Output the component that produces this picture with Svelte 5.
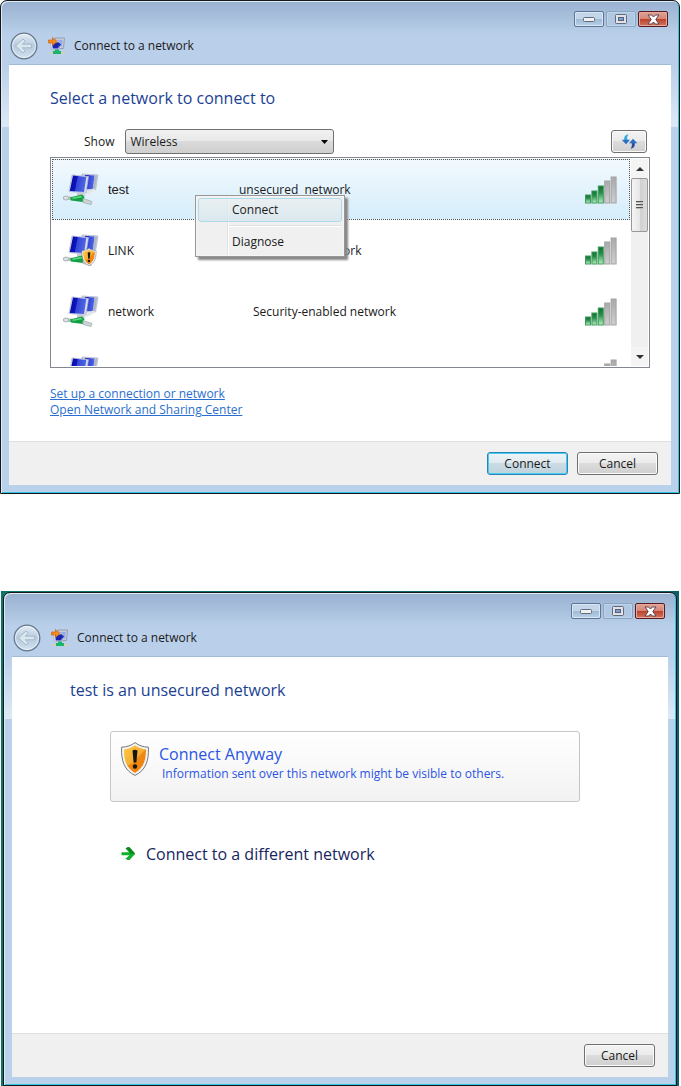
<script>
  let show = $state('Wireless');
  let selected = $state('test');

  const networks = [
    { name: 'test', type: 'unsecured\u00a0 network' },
    { name: 'LINK', type: 'unsecured network', warn: true },
    { name: 'network', type: 'Security-enabled network' },
    { name: '', type: '' },
  ];

  const bars = [8, 12, 17, 22, 26];
</script>

{#snippet shield()}
  <path d="M14 0.6C17.5 3.4 22 5 27.4 5.2C28 19 24.5 28.5 14 33.4C3.5 28.5 0 19 0.6 5.2C6 5 10.5 3.4 14 0.6Z" fill="#f4f4f4" stroke="#777" />
  <path d="M14 3.5C17.4 5.8 21 7 25 7.4C25 19 22 26.5 14 31C6 26.5 3 19 3 7.4C7 7 10.6 5.8 14 3.5Z" fill="url(#amber)" />
  <path d="M3 7.4C7 7 10.6 5.8 14 3.5C17.4 5.8 21 7 25 7.4C21 11 18 13 14 19C10 23 7 24 5.5 22C3.6 18 3 13 3 7.4Z" fill="#ffd65c" opacity="0.45" />
  <path d="M11.5 8.5Q14 7.2 16.5 8.5L15.4 20.5H12.6Z" fill="#16160c" />
  <circle cx="14" cy="24.5" r="2.2" fill="#16160c" />
{/snippet}

{#snippet titlebar()}
  <header>
    <div class="caption">
      <button class="cap" aria-label="Minimize">
        <svg width="12" height="6" viewBox="0 0 12 6"><rect x="0.5" y="1.5" width="11" height="4" rx="1" fill="#f2f2f2" stroke="#626a80" /></svg>
      </button>
      <button class="cap max" aria-label="Maximize">
        <svg width="12" height="10" viewBox="0 0 12 10">
          <rect x="0.5" y="0.5" width="11" height="9" rx="1" fill="#e0e2e6" stroke="#626a80" />
          <rect x="3.5" y="3.5" width="5" height="3" fill="#7b9fd0" stroke="#555f7c" />
        </svg>
      </button>
      <button class="cap close" aria-label="Close">
        <svg width="13" height="11" viewBox="0 0 13 11"><path d="M1 1H4.6L6.5 3L8.4 1H12L8.8 5.5L12 10H8.4L6.5 8L4.6 10H1L4.2 5.500Z" fill="#fff" stroke="#5d4650" /></svg>
      </button>
    </div>
    <div class="nav">
      <button class="back" aria-label="Back">
        <svg width="28" height="28" viewBox="0 0 28 28">
          <circle cx="14" cy="14" r="12.8" fill="url(#glass)" stroke="#68798f" stroke-width="1.3" />
          <circle cx="14" cy="14" r="11.5" fill="none" stroke="#f3f8fc" opacity="0.7" />
          <path d="M5.5 14L13 7L15.3 9.2L12.2 12.2H21.5V15.8H12.2L15.3 18.8L13 21Z" fill="#dbe7ef" stroke="#a5b9ca" stroke-linejoin="round" />
        </svg>
      </button>
      <svg class="appicon" width="18" height="18" viewBox="0 0 18 18">
        <path d="M7 1H16.500L15.500 11.500H7Z" fill="#c6ccd8" stroke="#8b93a6" stroke-width="0.8" />
        <path d="M9 3H14.5L14 9.500H9Z" fill="#8facec" />
        <path d="M2 4H11.500V12.500H3.500Z" fill="#dfe3ef" stroke="#a8afc4" stroke-width="0.8" />
        <path d="M4 5.500H10.500V11.500H4.800Z" fill="#1a25b4" />
        <path d="M9.5 4.500L13 7.500L10.500 10.500Z" fill="#1a25b4" />
        <path d="M0.5 3H4.500V0.500L9 4.600L4.500 8.500V6H0.500Z" fill="#f58a1f" stroke="#cb6610" stroke-width="0.7" />
        <path d="M1 16H17" stroke="#dccfae" stroke-width="1.6" />
        <path d="M7 12.500H11V14H13V17H5V14H7Z" fill="#19b56a" />
      </svg>
      <span>Connect to a network</span>
    </div>
  </header>
{/snippet}

<svg class="defs" width="0" height="0" aria-hidden="true">
  <defs>
    <linearGradient id="amber" x1="0" y1="0" x2="1" y2="1">
      <stop offset="0" stop-color="#fbc02c" />
      <stop offset="0.5" stop-color="#f08a10" />
      <stop offset="0.75" stop-color="#ee8412" />
      <stop offset="1" stop-color="#fbc63c" />
    </linearGradient>
    <linearGradient id="glass" x1="0" y1="0" x2="0" y2="1">
      <stop offset="0" stop-color="#e5edf5" />
      <stop offset="0.5" stop-color="#b5cade" />
      <stop offset="1" stop-color="#d4e4f0" />
    </linearGradient>
    <linearGradient id="screen" x1="0" y1="0" x2="1" y2="0.2">
      <stop offset="0" stop-color="#0508a0" />
      <stop offset="0.45" stop-color="#0d15bd" />
      <stop offset="0.5" stop-color="#3547da" />
      <stop offset="1" stop-color="#4f66e0" />
    </linearGradient>
    <linearGradient id="green" x1="0" y1="0" x2="0" y2="1">
      <stop offset="0" stop-color="#0f7030" />
      <stop offset="0.4" stop-color="#2a8c4b" />
      <stop offset="1" stop-color="#b5f0c2" />
    </linearGradient>
    <linearGradient id="grey" x1="0" y1="0" x2="0" y2="1">
      <stop offset="0" stop-color="#a9a9a9" />
      <stop offset="1" stop-color="#cecece" />
    </linearGradient>
  </defs>
</svg>

<section class="window">
  {@render titlebar()}
  <div class="client">
    <main class="pick">
      <h1>Select a network to connect to</h1>
      <div class="tools">
        <label for="show">Show</label>
        <div class="combo">
          <select id="show" bind:value={show}>
            <option>All</option>
            <option>Wireless</option>
            <option>Dial-up and VPN</option>
          </select>
          <svg width="7" height="4" viewBox="0 0 7 4"><path d="M0 0H7L3.500 4Z" fill="#000" /></svg>
        </div>
        <button class="btn refresh" aria-label="Refresh">
          <svg width="17" height="15" viewBox="0 0 17 15">
            <path d="M7.500 0.5C4 0.500 2.800 3 3.300 6H6.400C5.800 4 6 2 7.500 0.5Z" fill="#35a8dc" />
            <path d="M0.7 5.700H9L5 10.300Z" fill="#2b6fc2" />
            <path d="M9.500 14.5C13 14.500 14.200 12 13.700 9H10.600C11.200 11 11 13 9.500 14.500Z" fill="#2a4f9c" />
            <path d="M8 9.300H16.300L12 4.700Z" fill="#2b6fc2" />
          </svg>
        </button>
      </div>

      <div class="listbox">
        <ul>
          {#each networks as net}
            <li>
              <button class="net" class:selected={selected === net.name} onclick={() => (selected = net.name)}>
                <svg width="36" height="33" viewBox="0 0 36 33">
                  <path d="M19 1L35 2L32.500 17L18 17Z" fill="#c9cede" stroke="#b3bacb" stroke-width="0.8" />
                  <path d="M22 2L31.500 2.500L30 16H21Z" fill="url(#screen)" />
                  <path d="M31.500 2.500L34 3L32 16H30Z" fill="#aeb6cc" />
                  <path d="M22 20L30 15.500L33 17L24 22Z" fill="#e2e7ea" />
                  <path d="M9 2L25.500 3.500L23 20L6 18.500Z" fill="#d5daee" stroke="#b2bad6" stroke-width="0.8" />
                  <path d="M10 2.500L23.300 4L21 19L6.800 18Z" fill="url(#screen)" />
                  <path d="M14 19.500L20 20L23 22.500L14 23.500Z" fill="#c5ccd2" />
                  <path d="M2 25L10 25.500" stroke="#b6c1c4" stroke-width="3.5" stroke-linecap="round" />
                  <ellipse cx="3" cy="25" rx="2.800" ry="2" fill="#d9e0e2" stroke="#97a4a8" stroke-width="0.7" />
                  <path d="M7 24.500L19 21.500L21.500 24L20 29L8 27.500Z" fill="#12a043" />
                  <path d="M9 24.800L18 22.700L19.500 24.300L10 26Z" fill="#5fd686" />
                  <path d="M20 25.500L29 28.500L28 31.500L20 29.500Z" fill="#ccd4d7" stroke="#9ba8aa" stroke-width="0.7" />
                  {#if net.warn}
                    <svg x="18" y="14" width="16" height="18" viewBox="0 0 28 34">{@render shield()}</svg>
                  {/if}
                </svg>
                <span class="name">{net.name}</span>
                <span class="type">{net.type}</span>
                <svg width="32" height="28" viewBox="0 0 32 28">
                  {#each bars as h, i}
                    <rect
                      x={i * 6.4 + 0.5}
                      y={27 - h}
                      width="5"
                      height={h}
                      fill={i < 3 ? 'url(#green)' : 'url(#grey)'}
                      stroke={i < 3 ? '#3f9a5b' : '#a3a3a3'}
                    />
                  {/each}
                </svg>
              </button>
            </li>
          {/each}
        </ul>
        <div class="scrollbar">
          <button aria-label="Scroll up"><svg width="8" height="4" viewBox="0 0 8 4"><path d="M0 4L4 0L8 4Z" fill="#333" /></svg></button>
          <div class="thumb"><i></i><i></i><i></i></div>
          <button class="down" aria-label="Scroll down"><svg width="8" height="4" viewBox="0 0 8 4"><path d="M0 0L4 4L8 0Z" fill="#333" /></svg></button>
        </div>
        <div class="menu" role="menu">
          <button class="hot" role="menuitem">Connect</button>
          <hr />
          <button role="menuitem">Diagnose</button>
        </div>
      </div>

      <nav>
        <a href="#setup">Set up a connection or network</a>
        <a href="#center">Open Network and Sharing Center</a>
      </nav>
    </main>
    <footer>
      <button class="btn default">Connect</button>
      <button class="btn">Cancel</button>
    </footer>
  </div>
</section>

<div class="desktop">
  <section class="window">
    {@render titlebar()}
    <div class="client">
      <main class="confirm">
        <h1>test is an unsecured network</h1>
        <button class="command boxed">
          <svg width="28" height="34" viewBox="0 0 28 34">{@render shield()}</svg>
          <span class="text">
            <strong>Connect Anyway</strong>
            <small>Information sent over this network might be visible to others.</small>
          </span>
        </button>
        <button class="command">
          <svg width="15" height="14" viewBox="0 0 15 14">
            <path d="M0.5 5.200H8.500L4.500 1.500L6.500 0.300H8.500L14.200 6.700L8.500 13H6.500L4.500 11.800L8.500 8.200H0.500Z" fill="#0cb02a" />
            <path d="M8.500 0.300L14.200 6.700H9.500L5 1.500L6.500 0.300Z" fill="#078c1c" />
          </svg>
          <strong>Connect to a different network</strong>
        </button>
      </main>
      <footer class="single">
        <button class="btn">Cancel</button>
      </footer>
    </div>
  </section>
</div>

<style>
  :global(body) {
    background: #fff;
    color: #1a1a1a;
    font: 12px/16px 'Open Sans', 'Noto Sans', sans-serif;
  }

  button,
  select {
    font: inherit;
    color: inherit;
  }

  .defs {
    position: absolute;
  }

  .window {
    margin-right: 1px;
    padding: 0 8px 8px;
    border: 1px solid #14181c;
    border-radius: 7px 7px 0 0;
    background:
      linear-gradient(#98b1cf, #bad0ea 34px, transparent 34px),
      linear-gradient(#bad0ea 65px, #dde9f6 126px, #b9d1ea 126px);
    box-shadow: inset 1px 1px #dfeaf5, inset -1px -1px #35c3dd;
  }

  header {
    padding: 10px 3px 5px 1px;
  }

  .caption {
    display: flex;
    justify-content: flex-end;
    gap: 2px;
  }

  .cap {
    display: flex;
    align-items: center;
    justify-content: center;
    width: 30px;
    height: 16px;
    padding: 0;
    border: 1px solid #5d7594;
    border-radius: 2px;
    background: linear-gradient(#c3d5e9 50%, #9fb9d6 50%, #b9d0e8);
    box-shadow: inset 0 0 0 1px #d9e6f3;
  }

  .max {
    border-color: #8aa4c3;
    background: #b0c8e2;
    box-shadow: inset 0 0 0 1px #bfd3e9;
  }

  .close {
    border-color: #571c22;
    background: linear-gradient(#e0a396, #d58475 50%, #b8402c 50%, #d6755c);
    box-shadow: inset 0 0 0 1px #e5a99c;
  }

  .nav {
    display: flex;
    align-items: center;
    height: 28px;
    margin-top: 5px;
  }

  .back {
    display: flex;
    padding: 0;
    border: 0;
    background: none;
  }

  .appicon {
    margin: 0 8px 0 10px;
  }

  .client {
    background: #fff;
    box-shadow: 0 -1px #a1bcda;
  }

  h1 {
    margin: 0;
    color: #1c3f94;
    font-size: 16px;
    font-weight: 400;
    line-height: 24px;
  }

  .pick {
    padding: 21px 21px 23px 41px;
  }

  .tools {
    display: flex;
    align-items: center;
    margin-top: 19px;
    padding: 0 3px 3px 34px;
  }

  .combo {
    position: relative;
    flex: 0 1 209px;
    margin-left: 11px;
  }

  .combo svg {
    position: absolute;
    right: 6px;
    top: 11px;
    pointer-events: none;
  }

  select {
    appearance: none;
    display: block;
    width: 100%;
    height: 25px;
    padding: 0 20px 0 4px;
    border: 1px solid #707070;
    border-radius: 3px;
    background: linear-gradient(#f1f1f1, #e8e8e8 50%, #dadada 50%, #cfcfcf);
  }

  .btn {
    width: 81px;
    height: 23px;
    padding: 0;
    border: 1px solid #707070;
    border-radius: 3px;
    background: linear-gradient(#f3f3f3, #ebebeb 50%, #dcdcdc 50%, #cfcfcf);
    box-shadow: inset 0 0 0 1px #fafafa;
  }

  .default {
    border-color: #2c84b4;
    background: linear-gradient(#eff4f7, #dfe9ee 50%, #cbdbe4 50%, #bfd3dd);
    box-shadow: inset 0 0 0 1px #48cdf2;
  }

  .refresh {
    display: flex;
    align-items: center;
    justify-content: center;
    width: 36px;
    margin-left: auto;
  }

  .listbox {
    position: relative;
    display: flex;
    height: 207px;
    padding: 1px;
    border: 1px solid #828790;
  }

  ul {
    flex: 1;
    min-width: 0;
    margin: 0;
    padding: 0;
    overflow: hidden;
    list-style: none;
  }

  .net {
    display: flex;
    align-items: center;
    width: 100%;
    height: 61px;
    padding: 0 12px 0 10px;
    border: 1px solid transparent;
    background: none;
    text-align: left;
  }

  .net.selected {
    border: 1px dotted #555;
    background: linear-gradient(#f2f9fe, #d5edfb);
  }

  .name {
    width: 145px;
    margin-left: 9px;
  }

  .selected .name {
    width: 131px;
    font: 13px/16px 'Liberation Sans', Arial, sans-serif;
  }

  .type {
    flex: 1;
  }

  .scrollbar {
    display: flex;
    flex-direction: column;
    width: 17px;
    margin-left: 1px;
    background: #f0f0f0;
  }

  .scrollbar button {
    display: flex;
    align-items: center;
    justify-content: center;
    height: 19px;
    padding: 0;
    border: 0;
    background: #f4f4f4;
  }

  .scrollbar .down {
    margin-top: auto;
  }

  .thumb {
    display: flex;
    flex-direction: column;
    align-items: center;
    justify-content: center;
    gap: 1px;
    height: 52px;
    border: 1px solid #979797;
    border-radius: 2px;
    background: linear-gradient(90deg, #f5f5f5, #e6e6e6 50%, #cfcfcf 50%, #dcdcdc);
  }

  .thumb i {
    width: 7px;
    height: 2px;
    background: linear-gradient(#555 50%, #bbb 50%);
  }

  .menu {
    position: absolute;
    left: 144px;
    top: 37px;
    width: 144px;
    padding: 2px;
    border: 1px solid #979797;
    background: linear-gradient(90deg, transparent 31px, #e0e0e0 31px, #e0e0e0 32px, #fff 32px, #fff 33px, transparent 33px) #f0f0f0;
    box-shadow: inset 0 0 0 1px #f5f5f5, 3px 3px 2px #888;
  }

  .menu button {
    display: block;
    width: 100%;
    height: 24px;
    padding: 0 0 0 33px;
    border: 1px solid transparent;
    border-radius: 3px;
    background: none;
    text-align: left;
  }

  .menu .hot {
    border-color: #aedcec;
    background: linear-gradient(#e8eff2aa, #d5e7eecc);
  }

  hr {
    height: 1px;
    margin: 3px 0 3px 31px;
    border: 0;
    border-top: 1px solid #e0e0e0;
    background: #fff;
  }

  nav {
    display: flex;
    flex-direction: column;
    align-items: flex-start;
    margin-top: 18px;
  }

  a {
    color: #2a6fcf;
  }

  footer {
    display: flex;
    justify-content: flex-end;
    gap: 9px;
    padding: 10px 13px;
    border-top: 1px solid #dfdfdf;
    background: #f0f0f0;
  }

  .single .btn {
    width: 71px;
  }

  .desktop {
    margin: 97px 2px 0 1px;
    padding: 1px 1px 0 2px;
    background: linear-gradient(90deg, #0b7566, #0c5f68);
  }

  .confirm {
    padding: 21px 88px 166px 58px;
  }

  .command {
    display: flex;
    align-items: center;
    margin: 39px 0 0 40px;
    padding: 0 10px;
    border: 1px solid transparent;
    background: none;
    color: #17265e;
    text-align: left;
  }

  .boxed {
    align-items: flex-start;
    width: calc(100% - 40px);
    height: 71px;
    margin-top: 29px;
    padding: 10px;
    border-color: #c6c6c6;
    border-radius: 3px;
    background: linear-gradient(#fff, #f2f2f2);
    color: #2a55e5;
  }

  .text {
    display: flex;
    flex-direction: column;
    margin-left: 10px;
  }

  strong {
    font-size: 16px;
    font-weight: 400;
    line-height: 24px;
  }

  .command > strong {
    margin-left: 10px;
  }

  small {
    padding-left: 3px;
    font-size: 12px;
    line-height: 16px;
  }
</style>
